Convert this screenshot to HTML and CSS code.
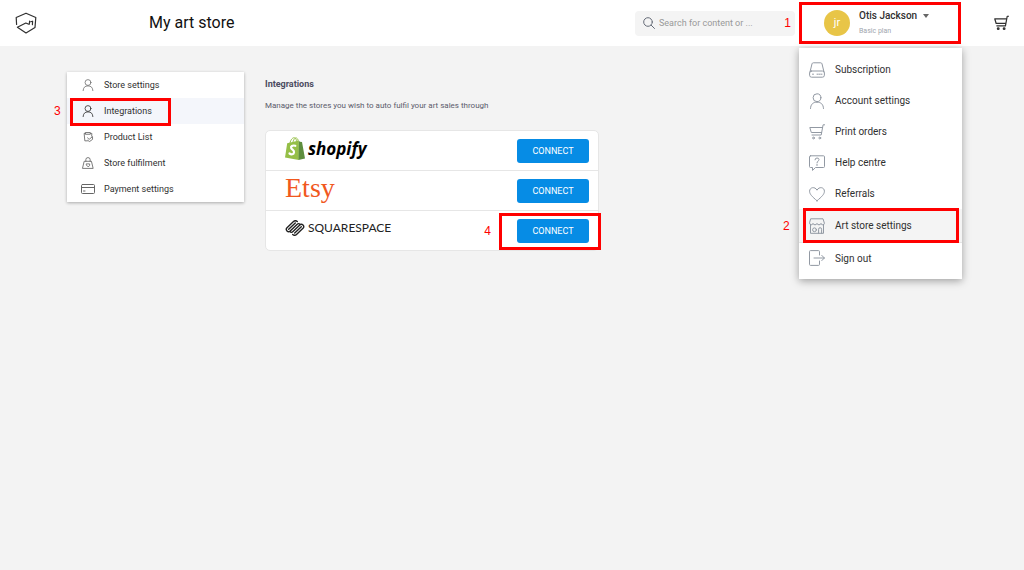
FILE: index.html
```html
<!DOCTYPE html>
<html lang="en">
<head>
    <meta charset="UTF-8">
    <meta name="viewport" content="width=device-width, initial-scale=1.0">
    <title>My art store</title>
    <link rel="stylesheet" href="styles.css">
</head>
<body>
    <!-- Shared icons -->
    <svg class="sprite" aria-hidden="true">
        <symbol id="icon-user" viewBox="0 0 16 16">
            <circle cx="8" cy="4.700" r="3.900"/>
            <path d="M1.500 15.500c.2-4.300 2.500-6.300 6.500-6.300s6.300 2 6.500 6.300"/>
        </symbol>
        <symbol id="icon-cart" viewBox="0 0 16 16">
            <path d="M15.600.8h-1.500L12.200 11H3M13.600 3.500H.8l1.500 5h10.300"/>
            <circle cx="4.500" cy="14" r=".9"/>
            <circle cx="10.800" cy="14" r=".9"/>
        </symbol>
    </svg>

    <header class="header">
        <a class="brand" href="#" aria-label="Home">
            <svg class="brand-icon" viewBox="0 0 22 22">
                <path d="M1.600 12.500L1.200 5.500 11 1.200l9.800 4.300-.8 10-9 5.500-8.600-5.800 8.400-4.200 3 1.200M14.300 12.200l.3-3M15.800 9.800l1.800-.6-.2 3.400"/>
            </svg>
        </a>
        <h1 class="page-title">My art store</h1>

        <div class="search">
            <svg class="search-icon" viewBox="0 0 12 12">
                <circle cx="5" cy="5" r="4.300"/>
                <path d="M8.200 8.200l3.300 3.300"/>
            </svg>
            <input type="text" aria-label="Search" placeholder="Search for content or ...">
            <span class="step step-search">1</span>
        </div>

        <div class="account">
            <button class="account-button marked" type="button" aria-expanded="true">
                <span class="avatar">jr</span>
                <span class="account-text">
                    <span class="account-name">Otis Jackson <i class="caret"></i></span>
                    <span class="account-plan">Basic plan</span>
                </span>
            </button>

            <nav class="account-menu" aria-label="Account">
                <a href="#">
                    <svg class="menu-icon" viewBox="0 0 16 16"><path d="M1 10L3 1.800Q3.300.8 4.300.8h7.400q1 0 1.300 1L15 10"/><rect x=".6" y="9" width="14.800" height="6.200" rx="2"/><path d="M3.500 12.200h1M8 12.200h1M10 12.200h1M12 12.200h1"/></svg>
                    Subscription
                </a>
                <a href="#">
                    <svg class="menu-icon"><use href="#icon-user"/></svg>
                    Account settings
                </a>
                <a href="#">
                    <svg class="menu-icon"><use href="#icon-cart"/></svg>
                    Print orders
                </a>
                <a href="#">
                    <svg class="menu-icon" viewBox="0 0 16 16"><path d="M1.500.8h13q1 0 1 1v9.700q0 1-1 1H6.500L3.500 15.400v-2.900h-2q-1 0-1-1V1.800q0-1 1-1zM6 4.800q0-1.800 2-1.800t2 1.600c0 1.400-2 1.400-2 3.200M8 9.300v1.200"/></svg>
                    Help centre
                </a>
                <a href="#">
                    <svg class="menu-icon" viewBox="0 0 16 16"><path d="M8 14.800C3 10.500.6 8.200.6 5.200.6 1.200 6 .2 8 4.200c2-4 7.400-3 7.400 1 0 3-2.400 5.300-7.400 9.600z"/></svg>
                    Referrals
                </a>
                <a class="current" href="#">
                    <svg class="menu-icon" viewBox="0 0 16 16"><path d="M2 .8h12l1.400 4.400q0 1.600-1.600 1.600T12 5.400q-.3 1.400-2 1.400T8 5.400q-.3 1.400-2 1.400T4 5.400q-.3 1.400-1.800 1.400T.6 5.200zM1.500 7v8.300h13V7M9.600 15.300v-4q0-1.600 1.500-1.600t1.500 1.600v4"/><circle cx="5.500" cy="11.800" r="1.900"/></svg>
                    Art store settings
                    <span class="mark mark-store"></span>
                    <span class="step step-store">2</span>
                </a>
                <a class="sign-out" href="#">
                    <svg class="menu-icon" viewBox="0 0 16 16"><path d="M10.500 5V1.600q0-1-1-1h-8q-1 0-1 1v12.800q0 1 1 1h8q1 0 1-1V11M5 8h10.400M12.800 5.400L15.400 8l-2.600 2.600"/></svg>
                    Sign out
                </a>
            </nav>
        </div>

        <a class="cart" href="#" aria-label="Cart">
            <svg class="cart-icon"><use href="#icon-cart"/></svg>
        </a>
    </header>

    <main class="content">
        <nav class="sidebar" aria-label="Store">
            <a href="#">
                <svg class="side-icon"><use href="#icon-user"/></svg>
                Store settings
            </a>
            <a class="active" href="#">
                <svg class="side-icon"><use href="#icon-user"/></svg>
                Integrations
                <span class="mark mark-integrations"></span>
                <span class="step step-integrations">3</span>
            </a>
            <a href="#">
                <svg class="side-icon" viewBox="0 0 14 14"><path d="M4 2.800H2.500l.8 8.700h3M10 2.800h1.500L11.300 6M4.300 1.800h5.400v2H4.300zM6.500 8l1.800 1.800 4-3.300v3.300L8.800 12.300 6.800 11"/></svg>
                Product List
            </a>
            <a href="#">
                <svg class="side-icon" viewBox="0 0 14 14"><path d="M3 5h8l2 8.300H1zM4.500 5V3q0-2.300 2.500-2.300T9.500 3v2M7 11.300L5 9.300q-.4-1.800 1-1.600.8.100 1 .8.200-.7 1-.8 1.400-.2 1 1.600z"/></svg>
                Store fulfilment
            </a>
            <a href="#">
                <svg class="side-icon" viewBox="0 0 14 12"><rect x=".5" y="1.500" width="13" height="9" rx="1"/><path d="M.5 4.500h13M2.500 8h1.500"/></svg>
                Payment settings
            </a>
        </nav>

        <section class="integrations">
            <h2>Integrations</h2>
            <p>Manage the stores you wish to auto fulfil your art sales through</p>

            <ul class="store-list">
                <li>
                    <span class="logo shopify">
                        <svg class="shopify-bag" viewBox="0 0 20 23">
                            <path fill="#95bf47" d="M2.200 6.200L13.800 3.500V23L0 20.500z"/>
                            <path fill="#5e8e3e" d="M13.800 3.500l1 1.200 2.200.2L20 21.600 13.500 23z"/>
                            <path fill="none" stroke="#95bf47" d="M5 6C5.500 2.500 8 .3 9.500.8S11.500 3 11.500 4M8 5C8.500 2 10.500.2 11.800 1.200S13 3 13 3.500"/>
                            <path fill="none" stroke="#fff" stroke-width="2.200" d="M10.300 8.800C7.300 7.800 5.500 9.500 6.200 11.200S9.300 13 9 15.300 6.300 17.800 4.500 16.500"/>
                        </svg>
                        shopify
                    </span>
                    <button class="connect" type="button">CONNECT</button>
                </li>
                <li>
                    <span class="logo etsy">Etsy</span>
                    <button class="connect" type="button">CONNECT</button>
                </li>
                <li>
                    <span class="logo squarespace">
                        <svg class="squarespace-icon" viewBox="0 0 20 16">
                            <path d="M8.500 1.600L2 7.700a2.300 2.300 0 0 0 3.200 3.300L12 4.400a2.300 2.300 0 0 1 3.200 0M10.300 3L3.700 9.300M8.500 1.600a2.800 2.800 0 0 1 3.800 0M11.500 14.400L18 8.300a2.300 2.300 0 0 0-3.200-3.300L8 11.600a2.300 2.300 0 0 1-3.200 0M9.700 13L16.300 6.700M11.500 14.400a2.800 2.800 0 0 1-3.800 0"/>
                        </svg>
                        SQUARESPACE
                    </span>
                    <button class="connect" type="button">CONNECT</button>
                    <span class="mark mark-connect"></span>
                    <span class="step step-connect">4</span>
                </li>
            </ul>
        </section>
    </main>
</body>
</html>
```

FILE: styles.css
```css
* {
    box-sizing: border-box;
}

body {
    margin: 0;
    min-height: 100vh;
    background-color: #f3f3f3;
    color: #303030;
    font-family: Roboto, "Liberation Sans", sans-serif;
    font-size: 9px;
}

a {
    color: inherit;
    text-decoration: none;
}

button,
input {
    font-family: inherit;
}

svg {
    flex: none;
    fill: none;
    stroke: currentColor;
    stroke-linecap: round;
    stroke-linejoin: round;
}

.sprite {
    position: absolute;
    width: 0;
    height: 0;
}

/* Header */
.header {
    display: flex;
    align-items: center;
    height: 46px;
    padding: 0 15px;
    background-color: #fff;
}

.brand-icon {
    display: block;
    width: 22px;
    height: 22px;
    stroke-width: 1.2;
}

.page-title {
    margin: 0 auto 0 112px;
    padding-bottom: 2px;
    color: #111;
    font-size: 16px;
    font-weight: 400;
    white-space: nowrap;
}

.search {
    position: relative;
    display: flex;
    align-items: center;
    gap: 4px;
    width: 160px;
    height: 25px;
    margin-right: 4px;
    padding: 0 8px;
    border-radius: 4px;
    background-color: #f4f4f4;
}

.search-icon {
    width: 12px;
    height: 12px;
    color: #666c78;
}

.search input {
    flex: 1;
    min-width: 0;
    padding: 0;
    border: none;
    outline: none;
    background: transparent;
    font-size: 9px;
}

.search input::placeholder {
    color: #999;
}

.account {
    position: relative;
    margin-right: 33px;
}

.account-button {
    display: flex;
    align-items: center;
    gap: 9px;
    width: 162px;
    height: 42px;
    padding: 0 22px;
    border: none;
    background-color: #fff;
    color: #303030;
    text-align: left;
    cursor: pointer;
}

.account-button.marked {
    border: 3px solid #f00;
}

.avatar {
    width: 26px;
    height: 26px;
    border-radius: 50%;
    background-color: #e8c547;
    color: #fff;
    font-size: 11px;
    line-height: 26px;
    text-align: center;
}

.account-text {
    display: flex;
    flex-direction: column;
    gap: 4px;
}

.account-name {
    display: flex;
    align-items: center;
    gap: 6px;
    font-size: 10px;
    font-weight: 500;
    line-height: 12px;
    white-space: nowrap;
}

.caret {
    border: 3px solid transparent;
    border-top: 4px solid #666;
    border-bottom: none;
}

.account-plan {
    color: #a0a5ae;
    font-size: 7px;
    line-height: 10px;
}

.account-menu {
    position: absolute;
    top: 46px;
    left: 0;
    width: 163px;
    padding: 6px 0;
    background-color: #fff;
    box-shadow: 0 2px 8px rgba(0, 0, 0, 0.35);
}

.account-menu a {
    position: relative;
    display: flex;
    align-items: center;
    gap: 10px;
    height: 31px;
    padding: 0 10px;
    font-size: 10px;
}

.account-menu .current {
    height: 33px;
    background-color: #f4f4f4;
}

.account-menu .sign-out {
    border-top: 1px solid #e4e4e4;
}

.menu-icon {
    width: 16px;
    height: 16px;
    color: #9299a3;
}

.cart-icon {
    display: block;
    width: 15px;
    height: 16px;
    stroke-width: 1.3;
}

/* Content */
.content {
    display: flex;
    align-items: flex-start;
    gap: 21px;
    padding: 26px 67px;
}

.sidebar {
    flex: none;
    width: 177px;
    background-color: #fff;
    box-shadow: 0 1px 3px rgba(0, 0, 0, 0.3);
}

.sidebar a {
    position: relative;
    display: flex;
    align-items: center;
    gap: 9px;
    height: 26px;
    padding: 0 14px;
}

.sidebar .active {
    background-color: #f4f6fb;
}

.side-icon {
    width: 14px;
    height: 12px;
    color: #666;
}

.active .side-icon {
    color: #222;
}

.integrations {
    flex: 0 1 334px;
}

.integrations h2 {
    margin: 6px 0 10px;
    color: #4b4b5f;
    font-size: 9px;
    font-weight: 700;
    line-height: 12px;
}

.integrations p {
    margin: 0 0 18px;
    color: #5b5b6b;
    font-size: 8px;
    line-height: 12px;
}

.store-list {
    margin: 0;
    padding: 0;
    border: 1px solid #e6e6e6;
    border-radius: 5px;
    background-color: #fff;
    list-style: none;
}

.store-list li {
    position: relative;
    display: flex;
    align-items: center;
    justify-content: space-between;
    height: 39px;
    padding: 0 9px 0 19px;
}

.store-list li + li {
    height: 40px;
    border-top: 1px solid #e6e6e6;
}

.logo {
    display: flex;
    align-items: center;
    gap: 3px;
}

.shopify {
    padding-bottom: 4px;
    color: #000;
    font: italic 700 17px/24px "Open Sans", sans-serif;
}

.shopify-bag {
    width: 20px;
    height: 23px;
    stroke: none;
}

.etsy {
    padding-bottom: 6px;
    color: #f1581e;
    font: 28px/28px "Liberation Serif", serif;
}

.squarespace {
    padding-bottom: 6px;
    color: #222;
    font: 12px/16px Lato, sans-serif;
}

.squarespace-icon {
    width: 20px;
    height: 16px;
    stroke-width: 1.4;
}

.connect {
    width: 72px;
    height: 24px;
    padding: 0;
    border: none;
    border-radius: 3px;
    background-color: #068ce5;
    color: #fff;
    font-size: 9px;
    cursor: pointer;
}

.connect:hover {
    background-color: #0579c6;
}

/* Numbered walkthrough marks */
.mark {
    position: absolute;
    z-index: 1;
    border: 3px solid #f00;
    pointer-events: none;
}

.step {
    position: absolute;
    color: #f00;
    font: 12px/14px "Liberation Sans", sans-serif;
}

.step-search {
    right: 4px;
}

.mark-store {
    inset: -1px 3px -1px 4px;
}

.step-store {
    left: -16px;
}

.mark-integrations {
    inset: 0 73px -2px 3px;
}

.step-integrations {
    left: -13px;
}

.mark-connect {
    inset: 2px -3px 0 auto;
    width: 102px;
}

.step-connect {
    right: 107px;
}
```
